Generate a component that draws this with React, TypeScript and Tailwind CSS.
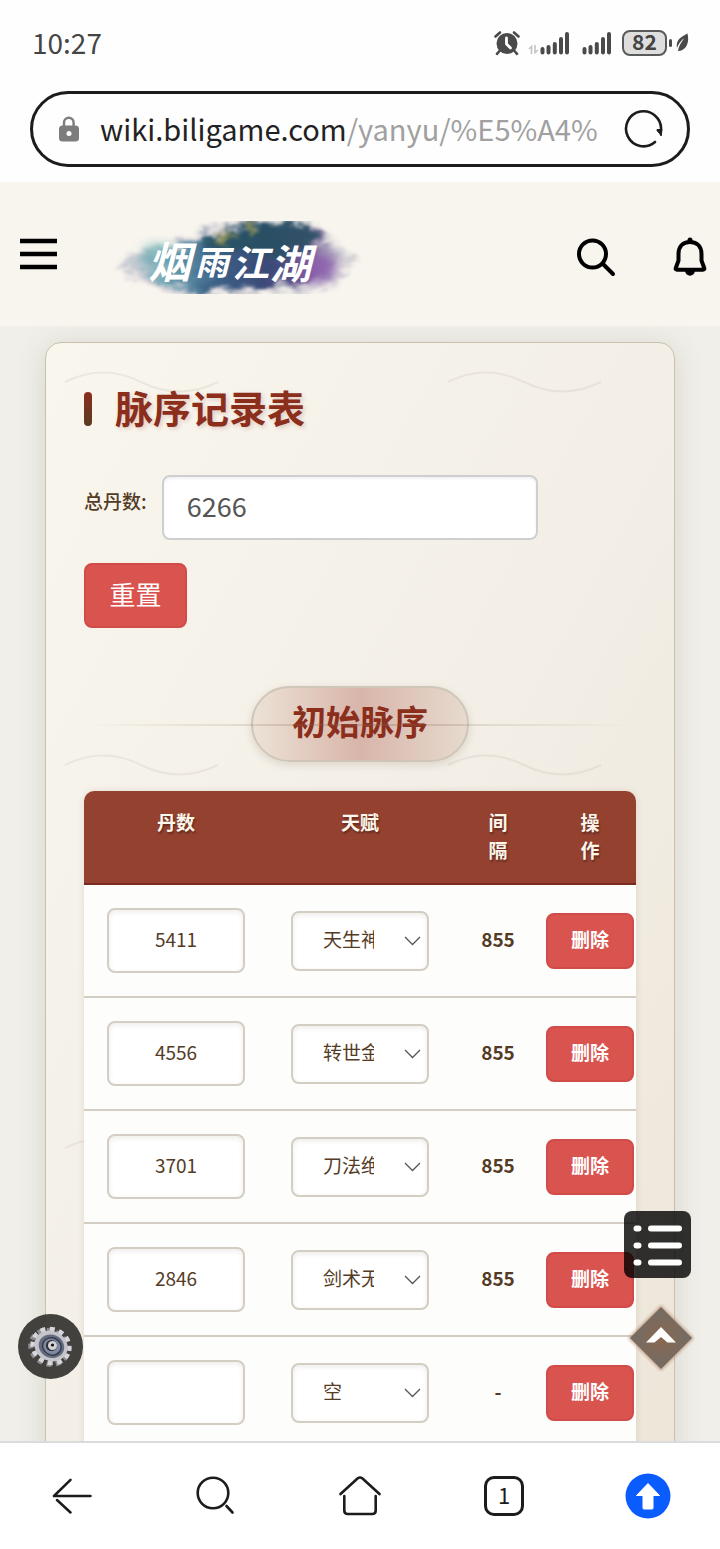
import React from 'react';

interface RecordRow {
  id: number;
  count: string;
  talent: string;
  gap: string;
}

const talents = ['空', '天生神力', '转世金刚', '刀法绝伦', '剑术无双'];

const records: RecordRow[] = [
  { id: 1, count: '5411', talent: '天生神力', gap: '855' },
  { id: 2, count: '4556', talent: '转世金刚', gap: '855' },
  { id: 3, count: '3701', talent: '刀法绝伦', gap: '855' },
  { id: 4, count: '2846', talent: '剑术无双', gap: '855' },
  { id: 5, count: '', talent: '空', gap: '-' },
];

const Signal: React.FC = () => (
  <svg width="30" height="24" viewBox="0 0 30 24" stroke="#4a4a4a" strokeWidth="4" strokeLinecap="round">
    <path d="M2.500 18v3.500M8.500 16v5.500M14.800 13v8.500M21 8v13.500M27 3v18.500" />
  </svg>
);

const StatusBar: React.FC = () => (
  <div className="flex h-[88px] shrink-0 items-center justify-between pl-8 pr-[31px] pb-1 text-[#454545]">
    <span className="text-[28px]">10:27</span>
    <div className="flex items-center pt-[2px]">
      <svg width="26" height="26" viewBox="0 0 26 26" fill="none">
        <circle cx="13" cy="13.500" r="10.500" fill="#4a4a4a" />
        <path d="M1.500 6.500 6 2.500M24.500 6.500 20 2.500M5.500 21 3 23.800M20.500 21l2.500 2.800" stroke="#4a4a4a" strokeWidth="2.600" strokeLinecap="round" />
        <path d="M12.500 8v6l4 4" stroke="#fff" strokeWidth="2.800" strokeLinecap="round" strokeLinejoin="round" />
      </svg>
      <svg className="mt-3 ml-2" width="12" height="12" viewBox="0 0 12 12" fill="none" stroke="#c4c4c4" strokeWidth="1.600">
        <path d="M1 6l2.500-2.500V11M7 2v7.500L10 7" />
      </svg>
      <Signal />
      <span className="w-3" />
      <Signal />
      <div className="ml-[10px] flex h-[26px] w-[45px] items-center justify-center rounded-lg border-2 border-[#5a5a5a] bg-[#dedede] pb-1 text-[21px] leading-none font-bold text-[#444]">
        82
      </div>
      <svg className="ml-[2px]" width="20" height="22" viewBox="0 0 20 22">
        <rect x="0" y="7" width="3" height="8" rx="1.500" fill="#4a4a4a" />
        <path d="M18.500 1.500C11 5 6.500 9 8 16c1-4 4-7 7-10-2 4-5 7-6 13 7 0 12-7 9.500-17.500z" fill="#4a4a4a" />
      </svg>
    </div>
  </div>
);

const AddressBar: React.FC = () => (
  <div className="flex h-[94px] shrink-0 items-start px-[30px] pt-[3px]">
    <div className="flex h-[76px] w-full items-center rounded-full border-3 border-[#1c1c1c] pr-[23px] pl-[25px]">
      <svg className="shrink-0" width="22" height="28" viewBox="0 0 22 28">
        <path d="M6 12V7.500a4.800 4.800 0 0 1 9.600 0V12" fill="none" stroke="#7d7d7d" strokeWidth="2.400" />
        <rect x="1" y="10.500" width="20" height="16" rx="3.500" fill="#7d7d7d" />
        <circle cx="11" cy="18.500" r="2.500" fill="#fff" />
      </svg>
      <button type="button" className="ml-5 min-w-0 flex-1 overflow-hidden text-left text-[29px] whitespace-nowrap text-[#222]">
        wiki.biligame.com<span className="text-[#a0a0a0]">/yanyu/%E5%A4%</span>
      </button>
      <button type="button" aria-label="刷新" className="shrink-0">
        <svg width="40" height="40" viewBox="0 0 40 40" fill="none">
          <path d="M31 33A17.500 17.500 0 1 1 37 21" stroke="#1c1c1c" strokeWidth="2.600" strokeLinecap="round" />
          <path d="M33 20.500h5l-.8 6.500-1.700-2.500-2.500-3z" fill="#1c1c1c" stroke="#1c1c1c" strokeLinejoin="round" />
        </svg>
      </button>
    </div>
  </div>
);

const Logo: React.FC = () => (
  <svg width="250" height="80" viewBox="0 0 250 80" role="img" aria-label="烟雨江湖">
    <defs>
      <filter id="ink" x="-10%" y="-20%" width="120%" height="140%" colorInterpolationFilters="sRGB">
        <feTurbulence type="fractalNoise" baseFrequency="0.05 0.09" numOctaves="5" seed="11" result="n" />
        <feGaussianBlur in="SourceGraphic" stdDeviation="2.500" result="soft" />
        <feDisplacementMap in="soft" in2="n" scale="24" xChannelSelector="R" yChannelSelector="G" />
        <feGaussianBlur stdDeviation="0.800" />
      </filter>
      <filter id="haze" x="-40%" y="-60%" width="180%" height="220%" colorInterpolationFilters="sRGB">
        <feGaussianBlur stdDeviation="6" />
      </filter>
      <linearGradient id="wash" x1="0" x2="1">
        <stop offset="0" stopColor="#8fb8c0" stopOpacity="0.300" />
        <stop offset="0.180" stopColor="#5a9bab" stopOpacity="0.850" />
        <stop offset="0.400" stopColor="#3c6186" />
        <stop offset="0.650" stopColor="#3a4a78" />
        <stop offset="0.820" stopColor="#6a548f" />
        <stop offset="1" stopColor="#8f84a4" stopOpacity="0.400" />
      </linearGradient>
      <clipPath id="logoClip">
        <rect x="0" y="3" width="250" height="73" />
      </clipPath>
    </defs>
    <g clipPath="url(#logoClip)">
      <g filter="url(#ink)">
        <path d="M10 44C28 32 54 26 84 18c24-14 70-22 116-14 10 10 20 20 40 36 4 8-4 12-12 18-10 14-34 18-60 18-50 4-90 2-120-2-16-6-24-10-32-18-6-4-4-6-6-12z" fill="#9d9ab4" opacity="0.400" />
        <path d="M16 44C34 36 60 32 88 22c26-14 70-20 106-16 12 10 18 22 34 34-2 12-14 18-32 24-34 10-66 6-100 9-28 0-44-6-54-11-12-4-22-10-26-18z" fill="url(#wash)" />
        <path d="M86 26c22-16 70-26 106-22 8 8 8 18 14 26-34 10-86 8-120-4z" fill="#24505f" opacity="0.800" />
        <path d="M104 14h14l-3 8h-13zM134 9h13l-5 7h-10z" fill="#a39b50" opacity="0.800" />
      </g>
      <ellipse cx="204" cy="50" rx="20" ry="14" fill="#8a55b0" opacity="0.700" filter="url(#haze)" />
      <ellipse cx="46" cy="34" rx="16" ry="7" fill="#2f9a9c" opacity="0.600" filter="url(#haze)" />
    </g>
    <g fill="#fff" fontFamily='"Liberation Serif","Noto Sans CJK SC",serif' fontWeight="700" fontStyle="italic">
      <text x="35" y="60" fontSize="43">烟</text>
      <text x="82" y="57" fontSize="34">雨</text>
      <text x="119" y="59" fontSize="37">江</text>
      <text x="157" y="61" fontSize="41">湖</text>
    </g>
  </svg>
);

const SiteHeader: React.FC = () => (
  <header className="flex h-36 shrink-0 items-center bg-[#f8f5ee] pr-3 pl-5">
    <button type="button" aria-label="菜单">
      <svg width="37" height="32" viewBox="0 0 37 32" stroke="#000" strokeWidth="4.500">
        <path d="M0 3h37M0 16h37M0 29h37" />
      </svg>
    </button>
    <a href="#home" className="mt-2 ml-14">
      <Logo />
    </a>
    <div className="ml-auto flex items-center gap-14 pt-[6px]">
      <button type="button" aria-label="搜索">
        <svg width="40" height="40" viewBox="0 0 40 40" fill="none" stroke="#000" strokeLinecap="round">
          <circle cx="16.500" cy="17" r="13.500" strokeWidth="4" />
          <path d="M27 27l10 10" strokeWidth="4" />
        </svg>
      </button>
      <button type="button" aria-label="通知">
        <svg width="36" height="40" viewBox="0 0 36 40" fill="none" stroke="#000" strokeWidth="4" strokeLinejoin="round">
          <path d="M18 5c-7.500 0-11.500 5-11.500 12v6.500L3.800 31c-.4 1.200.2 1.700 1.200 1.700h26c1 0 1.600-.5 1.200-1.700L29.500 23.500V17c0-7-4-12-11.500-12z" />
          <circle cx="18" cy="3" r="2.500" fill="#000" stroke="none" />
          <path d="M13 33h10c0 7.500-10 7.500-10 0z" fill="#000" stroke="none" />
        </svg>
      </button>
    </div>
  </header>
);

const Waves: React.FC = () => (
  <svg className="pointer-events-none absolute inset-0 h-full w-full" fill="none">
    <defs>
      <pattern id="waves" width="383" height="383" patternUnits="userSpaceOnUse">
        <path d="M19 39Q57 20 95 39T172 39" fill="none" stroke="#5a4030" strokeOpacity="0.080" strokeWidth="2" />
      </pattern>
    </defs>
    <rect width="100%" height="100%" fill="url(#waves)" />
  </svg>
);

const RecordTable: React.FC = () => (
  <table className="mt-[29px] w-full table-fixed border-separate border-spacing-0 rounded-t-[10px] bg-[#fdfdfb] text-center text-[19px] text-[#543b26] shadow-[0_0_6px_rgba(90,60,30,0.12)]">
    <thead>
      <tr className="h-[94px] bg-[#944130] align-top leading-7 text-[#fdf6ea] [&>th]:border-b-2 [&>th]:border-[#7c2a20] [&>th]:pt-[17px] [&>th]:font-bold [&>th]:[text-shadow:1px_2px_2px_rgba(0,0,0,0.35)]">
        <th className="w-1/3 rounded-tl-[10px]">丹数</th>
        <th className="w-1/3">天赋</th>
        <th className="w-1/6 px-8">间隔</th>
        <th className="w-1/6 rounded-tr-[10px] px-8">操作</th>
      </tr>
    </thead>
    <tbody>
      {records.map((row) => (
        <tr key={row.id} className="h-[113px] [&>td]:border-b-2 [&>td]:border-[#d3cdc4]">
          <td className="px-[23px]">
            <input
              type="text"
              aria-label="丹数"
              defaultValue={row.count}
              className="block h-[65px] w-full rounded-lg border-2 border-[#d3cdc4] bg-white pb-1 text-center shadow-[inset_0_2px_5px_rgba(90,70,40,0.1)]"
            />
          </td>
          <td className="px-[23px]">
            <div className="relative">
              <select
                aria-label="天赋"
                defaultValue={row.talent}
                className="block h-[60px] w-full appearance-none rounded-lg border-2 border-[#d3cdc4] bg-white pr-[53px] pb-[2px] pl-[30px] text-left shadow-[inset_0_2px_5px_rgba(90,70,40,0.1)]"
              >
                {talents.map((talent) => (
                  <option key={talent}>{talent}</option>
                ))}
              </select>
              <svg className="pointer-events-none absolute top-[25px] right-2" width="17" height="10" viewBox="0 0 17 10" fill="none" stroke="#555" strokeWidth="1.300">
                <path d="M1 1l7.500 7.500L16 1" />
              </svg>
            </div>
          </td>
          <td className="pb-[2px] font-bold">{row.gap}</td>
          <td className="px-[2px]">
            <button type="button" className="h-14 w-full rounded-lg border-2 border-[#d14c48] bg-[#d9534f] pb-[2px] font-bold text-white">
              删除
            </button>
          </td>
        </tr>
      ))}
    </tbody>
  </table>
);

const FloatingTools: React.FC = () => (
  <>
    <button type="button" aria-label="设置" className="absolute bottom-[62px] left-[18px]">
      <svg width="65" height="65" viewBox="0 0 65 65">
        <circle cx="32.500" cy="32.500" r="32.500" fill="#353430" fillOpacity="0.930" />
        <g transform="rotate(25 33 32)">
          <ellipse cx="32" cy="34" rx="19" ry="16.500" fill="none" stroke="#8d8c92" strokeWidth="5" strokeDasharray="4.800 4.400" />
          <ellipse cx="33" cy="32" rx="18.500" ry="16.500" fill="none" stroke="#d6d5da" strokeWidth="5" strokeDasharray="4.800 4.400" />
          <ellipse cx="33" cy="32" rx="17" ry="15" fill="#c5c4cb" />
          <ellipse cx="33.500" cy="32" rx="13" ry="11.500" fill="#646b7c" />
          <ellipse cx="34" cy="32" rx="9.500" ry="8.500" fill="#8088a0" stroke="#353c4c" strokeWidth="1.500" />
        </g>
        <circle cx="33.500" cy="31.500" r="5.500" fill="#2c2d35" />
        <circle cx="34.500" cy="31.500" r="4.500" fill="#d4d3d8" />
        <circle cx="34.500" cy="31" r="1.600" fill="#111" />
      </svg>
    </button>
    <button type="button" aria-label="目录" className="absolute right-[29px] bottom-[163px] rounded-lg bg-black/80">
      <svg width="67" height="67" viewBox="0 0 67 67" stroke="#fff" strokeWidth="6" strokeLinecap="round">
        <path d="M12.500 17.500h2M27 17.500h28M12.500 34.500h2M27 34.500h28M12.500 51.500h2M27 51.500h28" />
      </svg>
    </button>
    <button type="button" aria-label="返回顶部" className="absolute right-[25px] bottom-[69px]">
      <svg width="68" height="68" viewBox="0 0 68 68">
        <defs>
          <radialGradient id="ember">
            <stop offset="0" stopColor="#8a6850" />
            <stop offset="1" stopColor="#716c66" />
          </radialGradient>
          <filter id="glow" x="-10%" y="-10%" width="120%" height="120%">
            <feGaussianBlur stdDeviation="1.500" />
          </filter>
        </defs>
        <path d="M34 1l33 33-33 33L1 34z" fill="#b98a6c" opacity="0.700" filter="url(#glow)" />
        <path d="M34 3l31 31-31 31L3 34z" fill="url(#ember)" />
        <path d="M19 38.500 34 23l15 15.500h-8.500L34 33l-6.500 5.500z" fill="#fff" />
      </svg>
    </button>
  </>
);

const BottomNav: React.FC = () => (
  <nav className="grid h-[108px] shrink-0 grid-cols-5 place-items-center border-t-2 border-[#dadbdd] bg-white text-[#1c1c1c]">
    <button type="button" aria-label="后退">
      <svg width="40" height="36" viewBox="0 0 40 36" fill="none" stroke="currentColor" strokeWidth="2.500" strokeLinecap="round" strokeLinejoin="round">
        <path d="M18.500 1.800 2 18h36.500M5 22l13.500 12.500" />
      </svg>
    </button>
    <button type="button" aria-label="搜索网页">
      <svg width="40" height="40" viewBox="0 0 40 40" fill="none" stroke="currentColor" strokeWidth="2.600" strokeLinecap="round">
        <circle cx="17" cy="17" r="15.300" />
        <path d="M30.500 30l6 6.500" />
      </svg>
    </button>
    <button type="button" aria-label="主页">
      <svg width="42" height="40" viewBox="0 0 42 40" fill="none" stroke="currentColor" strokeWidth="2.600" strokeLinecap="round" strokeLinejoin="round">
        <path d="M1.500 18 18.500 2.500q2.500-2 5 0L40.500 18" />
        <path d="M5.300 20v14.500q0 3.500 3.500 3.500h24.400q3.500 0 3.500-3.500V20" />
      </svg>
    </button>
    <button type="button" aria-label="标签页" className="flex size-10 items-center justify-center rounded-[10px] border-3 border-[#1c1c1c] pb-1 text-[22px] leading-none">
      1
    </button>
    <button type="button" aria-label="回到顶部">
      <svg width="46" height="46" viewBox="0 0 46 46">
        <circle cx="23" cy="23" r="22.500" fill="#0b5cff" />
        <path d="M23 10.500 34.500 22.500H28V35q0 1-1 1h-8q-1 0-1-1V22.500h-6.500z" fill="#fff" stroke="#fff" strokeLinejoin="round" />
      </svg>
    </button>
  </nav>
);

const App: React.FC = () => {
  return (
    <div className="flex h-screen flex-col overflow-hidden bg-[#fefefe] font-['Noto_Sans_CJK_SC',sans-serif]">
      <StatusBar />
      <AddressBar />
      <SiteHeader />

      <div className="relative min-h-0 flex-1">
        <main className="h-full overflow-hidden bg-[#f1efe9] px-[45px] pt-4">
          <section className="relative rounded-2xl border border-[#c9c0ae] bg-linear-to-br from-[#f9f6ee] via-[#f3efe7] to-[#ede5d8] px-[38px] pt-[38px] pb-10 shadow-[0_4px_30px_rgba(70,80,60,0.16)]">
            <Waves />
            <div className="relative">
              <div className="flex h-[55px] items-center gap-[23px]">
                <span className="h-[34px] w-2 rounded bg-linear-to-b from-[#8b2e1c] to-[#5a3a22]" />
                <h1 className="pb-1 text-[38px] leading-[50px] font-bold text-[#8b2e1c] [text-shadow:2px_2px_4px_rgba(139,46,28,0.2)]">
                  脉序记录表
                </h1>
              </div>

              {/* Total pills */}
              <div className="mt-[39px] flex items-center">
                <label htmlFor="total" className="mb-3 text-[19px] font-medium text-[#543b26]">
                  总丹数:
                </label>
                <input
                  id="total"
                  type="text"
                  defaultValue="6266"
                  className="ml-[15px] h-[65px] w-[376px] rounded-lg border-2 border-[#cfcfd1] bg-white px-[23px] pb-1 text-[27px] text-[#555] shadow-[inset_0_2px_3px_rgba(0,0,0,0.06)]"
                />
              </div>
              <button type="button" className="mt-[23px] block h-[65px] w-[103px] rounded-lg border-2 border-[#d14c48] bg-[#d9534f] pb-1 text-[26px] text-white">
                重置
              </button>

              {/* Section divider */}
              <div className="relative mt-[58px] flex justify-center">
                <h2 className="flex h-[76px] items-center rounded-full border-2 border-[#d0c6b8] bg-linear-to-r from-[#ece2d6] via-[#d8b5aa] to-[#e7dace] px-[39px] pb-2 text-[34px] font-bold text-[#8b2e1c] shadow-[0_3px_8px_rgba(90,60,30,0.15)]">
                  初始脉序
                </h2>
                <span className="absolute inset-x-0 top-[38px] h-[2px] bg-linear-to-r from-transparent via-[#8b6450]/30 to-transparent" />
              </div>

              <RecordTable />
            </div>
          </section>
        </main>
        <FloatingTools />
      </div>

      <BottomNav />
    </div>
  );
};

export default App;
